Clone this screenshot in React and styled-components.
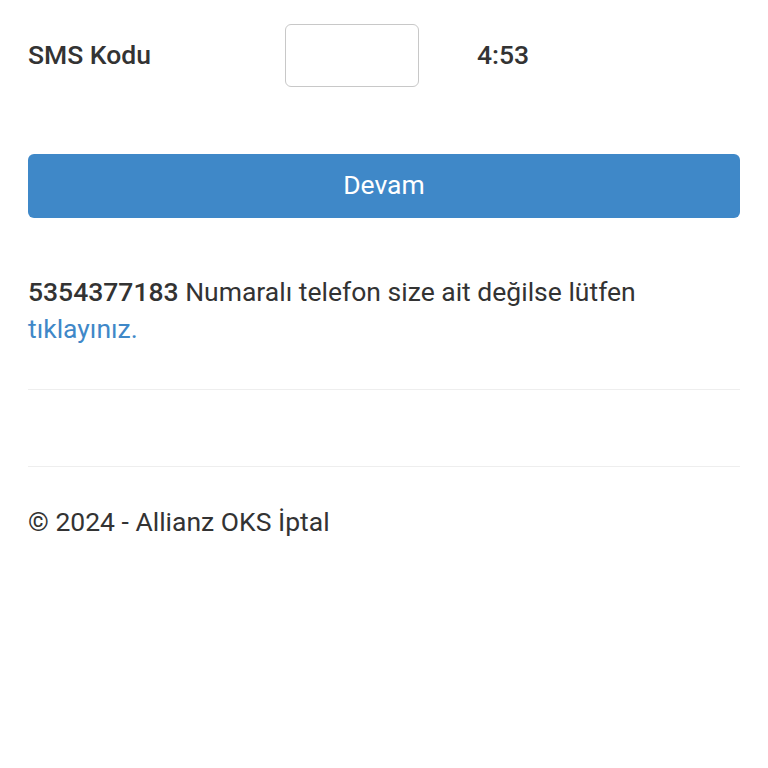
import React from "react";
import styled, { createGlobalStyle } from "styled-components";

const GlobalStyle = createGlobalStyle`
  html, body {
    margin: 0;
    padding: 0;
    background: #fff;
  }
  body {
    font-family: Roboto, "Liberation Sans", Arial, sans-serif;
    font-size: 26.5px;
    line-height: 37px;
    color: #333;
  }
`;

const App = () => {
  return (
    <>
      <GlobalStyle />
      <StLayout>
        <StCodeRow>
          <StLabel htmlFor="sms">SMS Kodu</StLabel>
          <StInput id="sms" type="text" />
          <StTimer>4:53</StTimer>
        </StCodeRow>
        <StButton type="button">Devam</StButton>
        <StNote>
          <b>5354377183</b> Numaralı telefon size ait değilse lütfen{" "}
          <StLink href="#">tıklayınız.</StLink>
        </StNote>
        <StRule />
        <StGap />
        <StRule />
        <StFooter>© 2024 - Allianz OKS İptal</StFooter>
      </StLayout>
    </>
  );
};

export default App;

const StLayout = styled.div`
  padding: 24px 28px 0;
  display: flex;
  flex-direction: column;
`;

const StCodeRow = styled.div`
  display: grid;
  grid-template-columns: 257px 192px auto;
  align-items: center;
`;

const StLabel = styled.label`
  font-weight: 500;
  padding-bottom: 2px;
`;

const StInput = styled.input`
  box-sizing: border-box;
  width: 134px;
  height: 63px;
  border: 1.5px solid #c8c8c8;
  border-radius: 6px;
  background: #fff;
  outline: none;
`;

const StTimer = styled.span`
  font-weight: 500;
  padding-bottom: 2px;
`;

const StButton = styled.button`
  margin-top: 67px;
  padding: 0 0 4px;
  height: 64px;
  width: 100%;
  border: none;
  border-radius: 6px;
  background: #3f88c8;
  color: #fff;
  font-family: inherit;
  font-size: 26.5px;
  cursor: pointer;
`;

const StNote = styled.p`
  margin: 55px 0 42px;

  b {
    font-weight: 500;
  }
`;

const StLink = styled.a`
  color: #3f88c8;
  text-decoration: none;
`;

const StRule = styled.hr`
  margin: 0;
  border: none;
  border-top: 1.5px solid #eee;
`;

const StGap = styled.div`
  height: 76px;
`;

const StFooter = styled.p`
  margin: 36px 0 0;
`;
